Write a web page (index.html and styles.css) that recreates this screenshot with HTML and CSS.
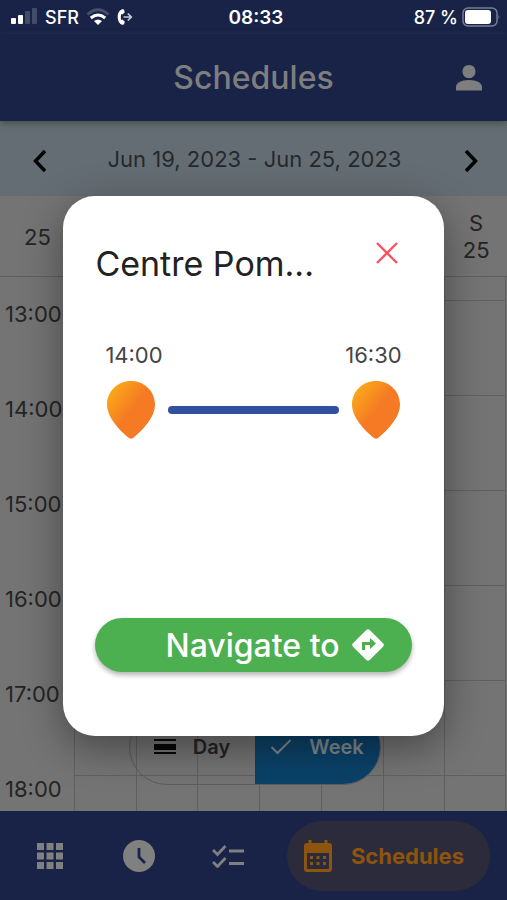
FILE: index.html
```
<!DOCTYPE html>
<html lang="en">
<head>
<meta charset="utf-8">
<meta name="viewport" content="width=device-width, initial-scale=1">
<title>Schedules</title>
<link rel="stylesheet" href="styles.css">
</head>
<body>
<div class="app">
  <div class="status">
    <div class="status-left">
      <svg class="signal" viewBox="0 0 27 18" width="27" height="18"><g fill="#fff"><rect x="0" y="11" width="5" height="6" rx="1"/><rect x="7" y="8" width="5" height="9" rx="1"/><g opacity=".18"><rect x="14" y="4" width="5" height="13" rx="1"/><rect x="21" y="1" width="5" height="16" rx="1"/></g></g></svg>
      <span>SFR</span>
      <svg class="wifi" viewBox="0 0 24 18" width="24" height="18"><g fill="none" stroke="#fff" stroke-width="3"><path d="M1.500 6.500Q12-3 22.500 6.500" opacity=".2"/><path d="M4.800 10Q12 4 19.200 10"/></g><path d="M8 13Q12 10 16 13L12 17Z" fill="#fff"/></svg>
      <svg viewBox="0 0 16 18" width="16" height="18"><path d="M5.500 1.200C2.500 1.800.7 5 .7 9s1.800 7.200 4.800 7.800c.8.100 1.600-.4 1.800-1.200l.4-2.200-2.300-1.800-1.100.5c-.6-2-.6-4.200 0-6.200l1.100.5 2.300-1.800-.4-2.200C7.100 1.600 6.300 1.100 5.500 1.200Z" fill="#fff"/><path d="M6.500 9H14M10.800 5.500 14.300 9l-3.500 3.500" fill="none" stroke="#c8cbd6" stroke-width="1.700"/></svg>
    </div>
    <strong>08:33</strong>
    <div class="status-right">
      <span>87 %</span>
      <svg viewBox="0 0 39 20" width="39" height="20"><rect x="1" y="1" width="34" height="18" rx="5" fill="none" stroke="#777e99" stroke-width="1.500"/><rect x="3" y="3" width="26" height="14" rx="3" fill="#fff"/><path d="M36.500 7.500q1.800 2.500 0 5Z" fill="#777e99"/></svg>
    </div>
  </div>

  <header class="header">
    <h1>Schedules</h1>
    <button class="profile" aria-label="Profile"><svg viewBox="0 0 28 28" width="28" height="28"><path d="M14 1c4 0 6.500 2.800 6.500 6.600 0 3.700-2.500 6.700-6.500 6.700s-6.500-3-6.500-6.700C7.500 3.800 10 1 14 1ZM1 26.500V23c0-4 5-7 13-7s13 3 13 7v3.500Z" fill="#7e7e7e"/></svg></button>
  </header>

  <nav class="week-bar" aria-label="Week">
    <button aria-label="Previous week"><svg viewBox="0 0 16 24" width="16" height="24"><path d="M13 2 3.500 12 13 22" fill="none" stroke="#030303" stroke-width="3.500"/></svg></button>
    <span>Jun 19, 2023 - Jun 25, 2023</span>
    <button aria-label="Next week"><svg viewBox="0 0 16 24" width="16" height="24"><path d="M3 2 12.500 12 3 22" fill="none" stroke="#030303" stroke-width="3.500"/></svg></button>
  </nav>

  <main class="calendar">
    <div class="days"><span class="week-number">25</span><span class="day">S<br>25</span></div>
    <div class="hours">
      <div class="row lead"><span class="time"></span><i></i><i></i><i></i><i></i><i></i><i></i><i></i></div>
      <div class="row"><span class="time">13:00</span><i></i><i></i><i></i><i></i><i></i><i></i><i></i></div>
      <div class="row"><span class="time">14:00</span><i></i><i></i><i></i><i></i><i></i><i></i><i></i></div>
      <div class="row"><span class="time">15:00</span><i></i><i></i><i></i><i></i><i></i><i></i><i></i></div>
      <div class="row"><span class="time">16:00</span><i></i><i></i><i></i><i></i><i></i><i></i><i></i></div>
      <div class="row"><span class="time">17:00</span><i></i><i></i><i></i><i></i><i></i><i></i><i></i></div>
      <div class="row"><span class="time">18:00</span><i></i><i></i><i></i><i></i><i></i><i></i><i></i></div>
    </div>
    <div class="view-switch">
      <button><svg viewBox="0 0 22 16" width="22" height="16"><path d="M0 0h22v2H0zM0 5h22v6H0zM0 13h22v2H0z" fill="#080808"/></svg>Day</button>
      <button class="selected"><svg viewBox="0 0 22 16" width="22" height="16"><path d="m1.500 8 6 6L20.500 1" fill="none" stroke="#808b92" stroke-width="2"/></svg>Week</button>
    </div>
  </main>

  <nav class="tabs" aria-label="Main">
    <a href="#home" aria-label="Home"><svg viewBox="0 0 26 26" width="26" height="26"><path d="M0 0h7v7H0zM9.500 0h7v7h-7zM19 0h7v7h-7zM0 9.500h7v7H0zM9.500 9.500h7v7h-7zM19 9.500h7v7h-7zM0 19h7v7H0zM9.500 19h7v7h-7zM19 19h7v7h-7z" fill="#808080"/></svg></a>
    <a href="#hours" aria-label="Hours"><svg viewBox="0 0 32 32" width="32" height="32"><circle cx="16" cy="16" r="16" fill="#808080"/><path d="M16 8v9l6 6" fill="none" stroke="#182347" stroke-width="2.800"/></svg></a>
    <a href="#tasks" aria-label="Tasks"><svg viewBox="0 0 32 24" width="32" height="24"><path d="m1 6 4.500 4.500L13.500 2M1 18l4.500 4.500L13.500 14M17 7h15M17 19.500h15" fill="none" stroke="#808080" stroke-width="2.800"/></svg></a>
    <a class="current" href="#schedules"><svg viewBox="0 0 30 32" width="30" height="32"><path fill-rule="evenodd" d="M5.500 0h3v3h13V0h3v3H26q3 0 3 3v23q0 3-3 3H4q-3 0-3-3V6q0-3 3-3h1.500ZM4 13v15q0 1 1 1h20q1 0 1-1V13Z" fill="#8c540d"/><path d="M7 16h3v3H7zM13.500 16h3v3h-3zM20 16h3v3h-3zM7 22h3v3H7zM13.500 22h3v3h-3zM20 22h3v3h-3z" fill="#8c540d"/></svg><span>Schedules</span></a>
  </nav>

  <div class="overlay">
    <section class="dialog" role="dialog" aria-labelledby="place">
      <div class="dialog-head">
        <h2 id="place">Centre Pom...</h2>
        <button class="close" aria-label="Close"><svg viewBox="0 0 22 22" width="22" height="22"><path d="m1 1 20 20M21 1 1 21" fill="none" stroke="#fa5260" stroke-width="2.400"/></svg></button>
      </div>
      <div class="times"><time>14:00</time><time>16:30</time></div>
      <div class="route">
        <svg viewBox="0 0 48 58" width="48" height="58"><defs><linearGradient id="pin" x1="0" y1="0" x2=".7" y2=".65"><stop offset=".08" stop-color="#fbb018"/><stop offset=".75" stop-color="#f57a23"/></linearGradient></defs><path d="M24 0C37.500 0 48 10.500 48 23.500 48 36 36 49 26 57q-2 1.600-4 0C12 49 0 36 0 23.500 0 10.500 10.500 0 24 0Z" fill="url(#pin)"/></svg>
        <span class="track"></span>
        <svg viewBox="0 0 48 58" width="48" height="58"><path d="M24 0C37.500 0 48 10.500 48 23.500 48 36 36 49 26 57q-2 1.600-4 0C12 49 0 36 0 23.500 0 10.500 10.500 0 24 0Z" fill="url(#pin)"/></svg>
      </div>
      <button class="navigate">Navigate to<svg viewBox="0 0 32 32" width="32" height="32"><path d="M14.300 1q1.700-1.600 3.400 0L31 14.300q1.600 1.700 0 3.400L17.700 31q-1.700 1.600-3.400 0L1 17.700q-1.600-1.700 0-3.400Z" fill="#fff"/><path d="M10 21v-8h8V9l6 5.500-6 5.500v-4h-5v5Z" fill="#4caf50"/></svg></button>
    </section>
  </div>
</div>
</body>
</html>
```
FILE: styles.css
```
* { box-sizing: border-box; }
body { margin: 0; font-family: Inter, "Liberation Sans", sans-serif; }
button { padding: 0; border: 0; background: none; font: inherit; color: inherit; }
a { color: inherit; text-decoration: none; }
svg { display: block; flex: none; }
h1, h2 { margin: 0; font-weight: 400; }

.app { position: relative; display: flex; flex-direction: column; height: 100vh; min-height: 640px; overflow: hidden; }

.status { display: grid; grid-template-columns: 1fr auto 1fr; align-items: center; height: 34px; padding: 0 6px 0 11px; background: #182347; color: #fff; font-size: 18px; font-weight: 500; }
.status strong { font-size: 19px; font-weight: 600; }
.status-left, .status-right { display: flex; align-items: center; gap: 7px; }
.status-right { justify-content: flex-end; gap: 4px; }
.signal { margin-bottom: 2px; }

.header { position: relative; z-index: 1; display: grid; grid-template-columns: 1fr auto 1fr; align-items: center; height: 87px; padding: 0 24px; background: #182347; color: #7e7e7e; box-shadow: 0 3px 6px #46544c; }
.header h1 { grid-column: 2; font-size: 32px; font-weight: 500; }
.profile { justify-self: end; }

.week-bar { display: flex; align-items: center; justify-content: space-between; height: 75px; padding: 4px 28px 0 32px; background: #656d74; color: #25292c; font-size: 22px; }
.week-bar span { padding: 0 2px 4px 0; }

.calendar { position: relative; display: flex; flex: 1; flex-direction: column; min-height: 0; overflow: hidden; background: #747474; color: #242424; font-size: 22px; }
.days { display: grid; grid-template-columns: 75px repeat(7, 1fr); align-items: center; flex: none; height: 81px; padding-top: 2px; border-bottom: 1px solid #5f5f5f; line-height: 27px; text-align: center; }
.day { grid-column: 8; }
.hours { flex: 1; min-height: 0; padding-right: 1px; overflow: hidden; }
.row { display: grid; grid-template-columns: 74px repeat(7, 1fr); height: 95px; }
.row.lead { height: 24px; }
.row i { border-left: 1px solid #606060; border-bottom: 1px solid #606060; }
.row i:last-child { border-right: 1px solid #606060; }
.time { padding-left: 5px; line-height: 27px; }

.view-switch { position: absolute; bottom: 26px; left: 50%; display: flex; width: 252px; height: 76px; margin-left: -125px; border: 1px solid #5c5c5c; border-radius: 38px; overflow: hidden; font-size: 20px; font-weight: 600; }
.view-switch button { display: flex; flex: 1; align-items: center; justify-content: center; gap: 17px; }
.view-switch .selected { background: #0b4269; color: #808b92; }

.tabs { display: grid; grid-template-columns: repeat(3, 1fr) auto; align-items: center; justify-items: center; flex: none; height: 89px; padding: 0 17px 0 6px; background: #182347; }
.current { display: flex; align-items: center; gap: 18px; height: 70px; margin-left: 14px; padding: 0 26px 0 16px; border-radius: 35px; background: #2c2b3c; color: #8c540d; font-size: 22px; font-weight: 700; }

.overlay { position: absolute; inset: 32px 0 0; z-index: 2; display: flex; align-items: center; justify-content: center; }
.dialog { width: 75%; padding: 46px 32px 64px; border-radius: 32px; background: #fff; box-shadow: 0 12px 40px rgba(0, 0, 0, .4); }
.dialog-head { display: flex; justify-content: space-between; padding-right: 14px; color: #222; }
.dialog-head h2 { font-size: 34px; line-height: 44px; }
.close { display: flex; height: 24px; }
.times { display: flex; justify-content: space-between; padding: 55px 10px 0; color: #444; font-size: 22px; line-height: 28px; }
.route { display: flex; align-items: center; gap: 13px; padding: 12px 12px 0; }
.track { flex: 1; height: 8px; border-radius: 4px; background: #31509e; }
.navigate { display: flex; align-items: center; justify-content: center; gap: 12px; width: 100%; height: 54px; margin-top: 179px; padding-left: 42px; border-radius: 27px; background: #4caf50; color: #fff; font-size: 32px; font-weight: 500; box-shadow: 0 3px 5px rgba(0, 0, 0, .3); }
```
